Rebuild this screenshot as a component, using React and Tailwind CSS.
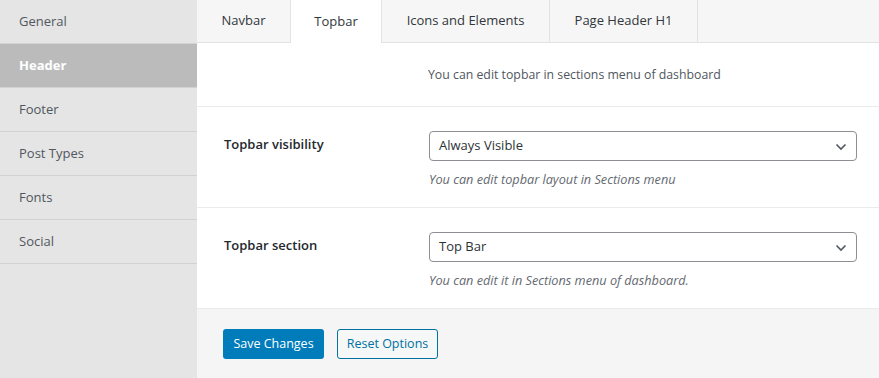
export default function App() {
  const side = ["General", "Header", "Footer", "Post Types", "Fonts", "Social"];
  const tabs = ["Navbar", "Topbar", "Icons and Elements", "Page Header H1"];
  const tabW = ["w-[94px]", "w-[91px]", "w-[168px]", "w-[148px]"];
  const Chevron = () => (
    <svg width="12" height="8" viewBox="0 0 12 8" className="absolute right-[9px] top-[11px]">
      <path d="M1.5 1.5 L6 6 L10.5 1.5" fill="none" stroke="#50575e" strokeWidth="1.6" />
    </svg>
  );
  return (
    <div className="flex w-[879px] h-[378px] overflow-hidden bg-white text-[13px] text-[#3c434a]" style={{ fontFamily: '"Open Sans", "Noto Sans", sans-serif' }}>
      <div className="w-[197px] shrink-0 bg-[#e5e5e5] flex flex-col">
        {side.map((s, i) => (
          <div
            key={s}
            className={
              "h-[44px] flex items-center pl-[19px] border-b border-[#d2d2d2] " +
              (i === 1 ? "bg-[#bbbbbb] text-white font-bold" : "text-[#50575e]")
            }
          >
            {s}
          </div>
        ))}
      </div>
      <div className="flex-1 flex flex-col">
        <div className="h-[43px] flex bg-[#f6f6f6] border-b border-[#e2e2e2]">
          {tabs.map((t, i) => (
            <div
              key={t}
              className={
                tabW[i] +
                " flex items-center justify-center border-r border-[#e2e2e2] text-[#32373c] " +
                (i === 1 ? "bg-white h-[43px] relative z-10" : "")
              }
            >
              {t}
            </div>
          ))}
        </div>
        <div className="h-[64px] flex items-center pl-[231px] pt-[2px] border-b border-[#ebebeb] text-[#50575e] text-[12.3px]">
          You can edit topbar in sections menu of dashboard
        </div>
        {[
          ["Topbar visibility", "Always Visible", "You can edit topbar layout in Sections menu"],
          ["Topbar section", "Top Bar", "You can edit it in Sections menu of dashboard."],
        ].map(([l, v, h]) => (
          <div key={l} className="h-[101px] flex border-b border-[#ebebeb] pt-[24px]">
            <div className="w-[232px] pl-[27px] pt-[4px] font-semibold text-[#23282d]">{l}</div>
            <div className="flex-1 pr-[22px]">
              <div className="relative h-[30px] border border-[#8c8f94] rounded-[4px] flex items-center pl-[9px] text-[#2c3338]">
                {v}
                <Chevron />
              </div>
              <div className="mt-[9px] italic text-[#646970] text-[12.7px]">{h}</div>
            </div>
          </div>
        ))}
        <div className="flex-1 bg-[#f5f5f5] flex items-start gap-[13px] pl-[26px] pt-[20px] text-[12.5px]">
          <button className="h-[30px] w-[101px] rounded-[3px] bg-[#007cba] text-white">Save Changes</button>
          <button className="h-[30px] w-[101px] rounded-[3px] border border-[#0071a1] text-[#0071a1] bg-[#f6f7f7]">Reset Options</button>
        </div>
      </div>
    </div>
  );
}
